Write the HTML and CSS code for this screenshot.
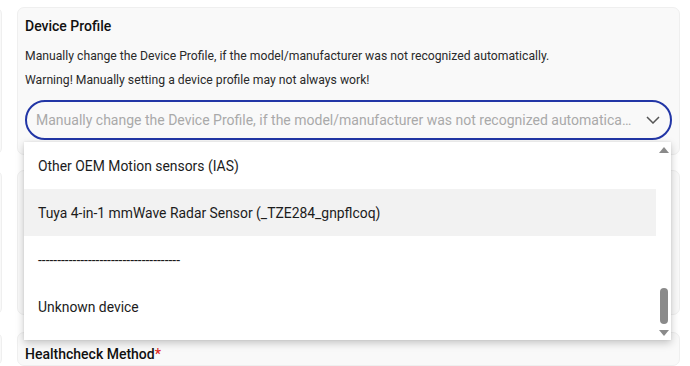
FILE: index.html
```html
<!DOCTYPE html>
<html lang="en">
<head>
<meta charset="utf-8">
<title>Device Profile</title>
<link rel="stylesheet" href="styles.css">
</head>
<body>
<div class="page">
  <div class="col side">
    <div class="card side-card c1"></div>
    <div class="card side-card c2"></div>
    <div class="card side-card c3"></div>
  </div>
  <div class="col main">
    <section class="card c1">
      <h2 class="title">Device Profile</h2>
      <p class="desc first">Manually change the Device Profile, if the model/manufacturer was not recognized automatically.</p>
      <p class="desc">Warning! Manually setting a device profile may not always work!</p>
      <div class="select-wrap">
        <div class="select">
          <span class="placeholder">Manually change the Device Profile, if the model/manufacturer was not recognized automatically.</span>
          <svg class="chev" width="14" height="8" viewBox="0 0 14 8"><path d="M1 1 L7 7 L13 1" fill="none" stroke="#555" stroke-width="1.5"/></svg>
        </div>
        <div class="menu">
          <ul class="options">
            <li class="opt">Other OEM Motion sensors (IAS)</li>
            <li class="opt hl">Tuya 4-in-1 mmWave Radar Sensor (_TZE284_gnpflcoq)</li>
            <li class="opt">-------------------------------------</li>
            <li class="opt">Unknown device</li>
          </ul>
          <div class="scrollbar">
            <span class="arrow up"></span>
            <span class="track"><span class="thumb"></span></span>
            <span class="arrow down"></span>
          </div>
        </div>
      </div>
    </section>
    <section class="card c2"></section>
    <section class="card c3">
      <h2 class="title">Healthcheck Method<span class="req">*</span></h2>
    </section>
  </div>
</div>
</body>
</html>
```
FILE: styles.css
```css
* { box-sizing: border-box; }
html, body { margin: 0; padding: 0; background: #fff; }
body {
  font-family: Roboto, "Noto Sans", Arial, sans-serif;
  color: #1f1f1f;
  width: 690px;
  height: 366px;
  overflow: hidden;
}
.page {
  display: grid;
  grid-template-columns: 102px 663px;
  column-gap: 15px;
  margin-left: -100px;
  padding-top: 7px;
}
.col { display: flex; flex-direction: column; gap: 15px; }
.card {
  background: #f9f9f9;
  border: 1px solid #efefef;
  border-radius: 7px;
  padding: 8px 7px;
}
.c1 { height: 148px; }
.c2 { height: 145px; margin-bottom: 2px; }
.c3 { height: 34px; padding-top: 11px; }
.title {
  margin: 0;
  font-size: 14px;
  line-height: 20px;
  font-weight: 500;
  color: #111;
  white-space: nowrap;
}
.req { color: #e0291f; }
.desc {
  margin: 0;
  font-size: 12.2px;
  line-height: 18px;
  color: #2a2a2a;
}
.desc.first { margin-top: 11px; margin-bottom: 6px; }
.select-wrap { position: relative; margin-top: 11px; }
.select {
  height: 40px;
  border: 2px solid #2236a6;
  border-radius: 20px;
  display: flex;
  align-items: center;
  padding: 0 9px 0 9px;
  gap: 12px;
}
.placeholder {
  flex: 1;
  min-width: 0;
  white-space: nowrap;
  overflow: hidden;
  text-overflow: ellipsis;
  font-size: 14px;
  color: #a9a9a9;
}
.chev { flex: none; margin-right: 1px; }
.menu {
  position: absolute;
  top: 42px;
  left: -1px;
  width: 647px;
  height: 198px;
  background: #fff;
  box-shadow: 0 3px 8px rgba(0,0,0,0.22), 0 0 2px rgba(0,0,0,0.08);
  display: flex;
  z-index: 2;
}
.options {
  list-style: none;
  margin: 0;
  padding: 0;
  flex: 1;
}
.opt {
  height: 47px;
  display: flex;
  align-items: center;
  padding-left: 14px;
  font-size: 13.9px;
  color: #1c1c1c;
}
.opt.hl { background: #f2f2f2; }
.scrollbar {
  width: 15px;
  flex: none;
  display: flex;
  flex-direction: column;
  align-items: center;
  padding: 5px 0 4px;
}
.arrow {
  width: 0; height: 0;
  border-left: 5px solid transparent;
  border-right: 5px solid transparent;
}
.arrow.up { border-bottom: 6px solid #8a8a8a; }
.arrow.down { border-top: 6px solid #8a8a8a; }
.track {
  flex: 1;
  display: flex;
  flex-direction: column;
  justify-content: flex-end;
  padding-bottom: 6px;
}
.thumb {
  width: 8px;
  height: 36px;
  border-radius: 4px;
  background: #8a8a8a;
}
```
